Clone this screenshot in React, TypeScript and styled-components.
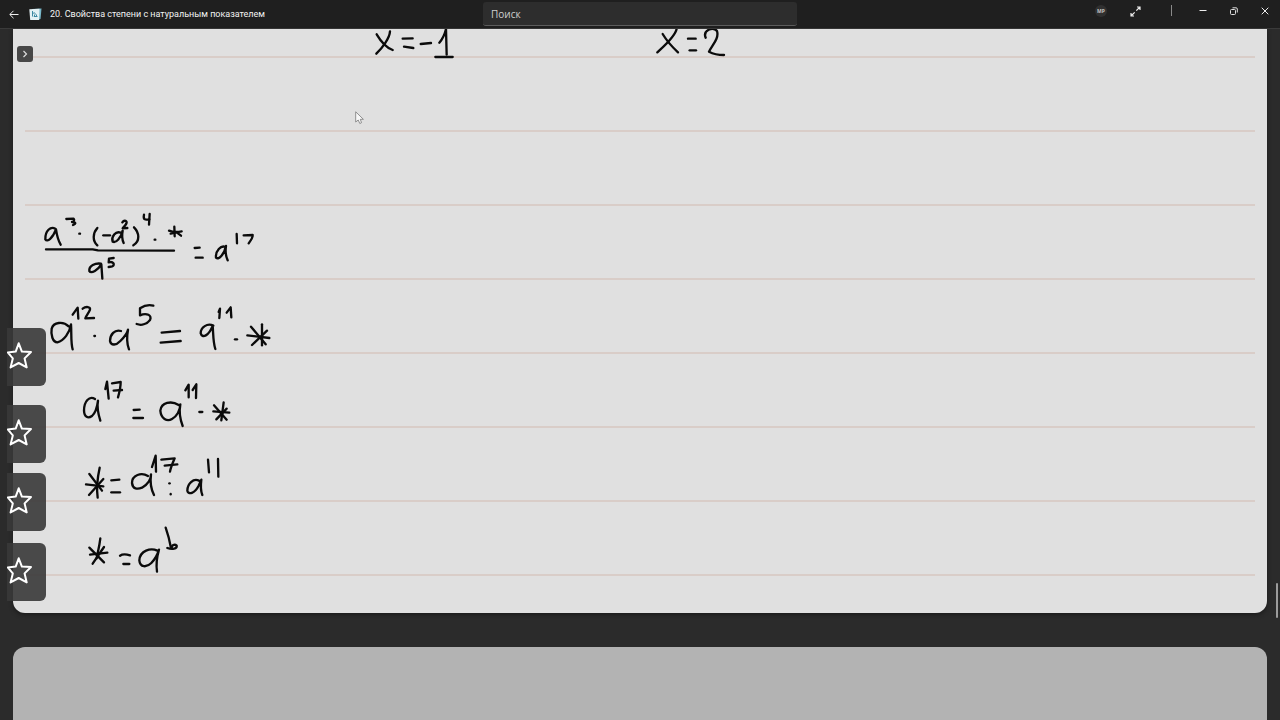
import React from "react";
import styled, { createGlobalStyle } from "styled-components";

const GlobalStyle = createGlobalStyle`
  * { box-sizing: border-box; }
  body {
    margin: 0;
    background: #2b2b2b;
    color: #f2f2f2;
    font-family: "Open Sans", "Noto Sans", sans-serif;
  }
  button { font: inherit; color: inherit; border: 0; padding: 0; background: none; }
`;

const Window = styled.div`
  height: 100vh;
  display: flex;
  flex-direction: column;
  overflow: hidden;
`;

const TitleBar = styled.header`
  flex: none;
  height: 29px;
  display: grid;
  grid-template-columns: 1fr 314px 1fr;
  background: #1f1f1f;
  border-bottom: 1px solid #3a3a3a;
`;

const TitleGroup = styled.div`
  display: flex;
  align-items: center;
  gap: 8px;
  padding-left: 7px;
  min-width: 0;
`;

const IconButton = styled.button<{ $width: number }>`
  width: ${(p) => p.$width}px;
  height: 22px;
  display: flex;
  align-items: center;
  justify-content: center;
`;

const Title = styled.h1`
  margin: 0;
  font-family: Roboto, "Noto Sans", sans-serif;
  font-size: 9px;
  line-height: 16px;
  font-weight: 400;
  white-space: nowrap;
`;

const SearchBox = styled.input`
  align-self: start;
  width: 100%;
  height: 24px;
  margin-top: 2px;
  padding: 0 8px;
  border: 0;
  border-bottom: 1px solid #5c5c5c;
  border-radius: 3px;
  outline: 0;
  background: #2d2d2d;
  color: #f2f2f2;
  font: 10px "Open Sans", "Noto Sans", sans-serif;
  &::placeholder { color: #cfcfcf; opacity: 1; }
`;

const Controls = styled.div`
  display: flex;
  align-items: flex-start;
  justify-content: flex-end;
`;

const AccountControls = styled.div`
  display: flex;
  align-items: center;
  gap: 4px;
  padding-right: 21px;
`;

const Avatar = styled.span`
  width: 12px;
  height: 12px;
  border-radius: 50%;
  background: #303030;
  color: #c4c4c4;
  font-size: 5px;
  line-height: 12px;
  font-weight: 700;
  text-align: center;
`;

const WindowControls = styled.div`
  display: flex;
  gap: 1px;
  padding-left: 16px;
`;

const Divider = styled.span`
  width: 1px;
  height: 11px;
  margin-top: 5px;
  background: #8a8a8a;
`;

const Desk = styled.main`
  position: relative;
  flex: 1;
  min-height: 0;
  display: flex;
  flex-direction: column;
  gap: 34px;
  padding: 0 13px;
`;

const Sheet = styled.section`
  position: relative;
  flex: none;
  padding: 0 12px 37px;
  border-radius: 0 0 12px 12px;
  background: #e0e0e0;
  box-shadow: 0 2px 4px #1c1c1c;
  overflow: hidden;
`;

const Rule = styled.div<{ $first?: boolean }>`
  height: ${(p) => (p.$first ? 29 : 74)}px;
  border-bottom: 2px solid #d9cdc8;
`;

const NextSheet = styled.section`
  flex: 1;
  border-radius: 12px 12px 0 0;
  background: #b3b3b3;
`;

const InkLayer = styled.svg`
  position: absolute;
  left: 0;
  top: 0;
  width: 100%;
  height: 100%;
`;

const ExpandButton = styled.button`
  position: absolute;
  left: 17px;
  top: 17px;
  width: 16px;
  height: 16px;
  display: flex;
  align-items: center;
  justify-content: center;
  border-radius: 3px;
  background: #474747;
`;

const Bookmark = styled.button<{ $top: number }>`
  position: absolute;
  left: 7px;
  top: ${(p) => p.$top}px;
  width: 39px;
  height: 58px;
  display: flex;
  align-items: center;
  padding-bottom: 4px;
  border-radius: 0 6px 6px 0;
  background: rgba(57, 57, 57, 0.9);
`;

const Pointer = styled.svg`
  position: absolute;
  left: 355px;
  top: 82px;
`;

const ScrollThumb = styled.div`
  position: absolute;
  right: 2px;
  top: 554px;
  width: 2px;
  height: 35px;
  border-radius: 1px;
  background: #9c9c9c;
`;

type InkNote = { label: string; x: number; y: number; width: number; strokes: string[] };

/* Pen strokes are stored in tablet units, three to a page pixel. */
const notes: InkNote[] = [
  {
    label: "x = -1, x = 2", x: 327, y: -9, width: 7,
    strokes: [
      "M110 43C120 60 137 82 158 90", "M150 34C149 55 126 85 109 101",
      "M188 56L218 55", "M192 80L220 84", "M242 72L273 69",
      "M298 68C307 58 314 44 318 27L320 104", "M286 111L338 111",
      "M968 42C980 62 1000 84 1014 97", "M1010 26C1006 50 970 80 952 97",
      "M1044 56L1067 56", "M1049 91L1068 91",
      "M1097 53C1088 32 1118 18 1131 33C1138 55 1117 75 1107 95C1120 102 1135 105 1152 105",
    ],
  },
  {
    label: "a³ · (-a²)⁴ · * / a⁵ = a¹⁷", x: 17, y: 171, width: 7,
    strokes: [
      "M76 86C62 78 45 92 46 118C52 128 68 114 78 88C80 102 84 120 92 134",
      "M109 57L131 56C135 61 130 66 126 66C134 66 142 69 129 75", "M148 101L150 101",
      "M202 84C188 100 187 122 202 136", "M220 106L240 106",
      "M272 98C257 92 243 110 248 125C258 130 273 113 278 92C275 107 276 118 281 129",
      "M277 67C283 58 293 63 289 71C285 78 280 82 278 85L292 84",
      "M312 82C328 98 331 124 310 136",
      "M342 44C339 58 344 61 358 58", "M359 42L357 74", "M374 119L376 119",
      "M417 92C430 97 441 97 455 94", "M433 80L434 109", "M422 101L440 97L453 107",
      "M48 148L188 148L204 151L432 152",
      "M213 191C196 188 176 198 178 213C184 222 204 210 214 193L217 236",
      "M251 174L237 176L236 187C250 183 256 194 247 199L236 201",
      "M494 144L509 143", "M497 173L518 173",
      "M586 141C573 135 556 153 558 173C567 181 583 162 588 138C585 156 588 170 593 181",
      "M620 102L621 130", "M641 106L668 105C669 112 662 122 656 130",
    ],
  },
  {
    label: "a¹² · a⁵ = a¹¹ · *", x: -13, y: 261, width: 7,
    strokes: [
      "M206 109C190 93 160 96 155 116C152 134 158 157 172 157C192 152 209 128 213 103C215 130 212 160 218 178",
      "M218 74L233 53L235 86", "M248 56C258 48 272 50 270 59C266 70 258 78 256 85L282 84",
      "M283 138L285 138",
      "M363 123C344 117 330 134 330 153C333 168 349 166 361 153C372 142 382 128 384 119C380 140 380 160 387 178",
      "M460 47C446 43 432 47 420 55L420 76C440 67 457 76 450 90C440 103 424 107 410 102",
      "M485 128L540 123", "M482 158L542 153",
      "M640 107C622 98 602 112 602 130C606 146 627 138 638 107C640 130 639 156 646 177",
      "M656 66L660 56L658 84", "M680 68L692 52L694 82", "M705 148L711 148",
      "M742 136L808 144", "M753 110L797 163", "M786 103L786 166", "M801 122L756 165",
    ],
  },
  {
    label: "a¹⁷ = a¹¹ · *", x: -13, y: 341, width: 7,
    strokes: [
      "M285 87C268 76 252 94 252 122C253 142 264 146 276 138C287 128 292 108 294 92C290 112 296 136 301 152",
      "M316 57L321 35L326 86", "M336 40L362 36C362 50 358 68 354 82", "M341 62L366 60",
      "M401 120L419 119", "M400 144L429 144",
      "M536 105C514 91 484 97 481 122C483 146 501 156 516 147C530 140 541 121 541 103C536 130 541 150 548 168",
      "M556 61L566 44L566 82", "M578 60L589 43L588 84", "M598 126L607 126",
      "M640 124L688 128", "M642 106L680 149", "M671 97L664 151", "M680 116L649 148",
    ],
  },
  {
    label: "* = a¹⁷ : a¹¹", x: -13, y: 416, width: 7,
    strokes: [
      "M299 68C292 100 289 130 293 158", "M258 118L310 124", "M268 87L306 137", "M310 102L267 150",
      "M334 106L358 104", "M334 142L360 142",
      "M444 93C424 81 396 90 396 114C398 132 412 134 426 128C444 118 453 104 453 88C450 110 454 134 462 150",
      "M456 66L467 32L468 80", "M484 44L524 40C518 54 512 68 510 80", "M494 62L532 58",
      "M508 115L509 115", "M512 147L512 148",
      "M597 107C580 99 562 116 562 137C565 151 584 145 596 122L604 104C602 120 602 138 607 150",
      "M624 44L627 82", "M654 42L655 95",
    ],
  },
  {
    label: "* = a⁶", x: -13, y: 486, width: 7,
    strokes: [
      "M301 70C298 96 293 112 290 130", "M268 98L312 142", "M270 119L322 113", "M312 96L278 146",
      "M360 122C369 116 380 118 390 121", "M370 147L388 147",
      "M472 107C452 98 420 106 418 136C420 158 440 158 454 144C466 132 474 114 477 104C470 128 468 150 471 170",
      "M497 38C504 58 510 82 513 99", "M502 99C516 104 532 102 530 92C524 86 514 90 515 101",
    ],
  },
];

const bookmarks = [299, 376, 444, 514];
const ruledRows = [1, 2, 3, 4, 5, 6, 7];

function StarIcon() {
  return (
    <svg width="25" height="27" viewBox="0 0 25 27" fill="none" stroke="#fff" strokeWidth="2" strokeLinejoin="round" aria-hidden="true">
      <path d="M11.7 1.3L14.9 9.6L24 10L17.6 16.4L19.7 25.4L11.7 21L3.6 25.4L5.8 16.4L.8 10.4L8.7 9.6Z" />
    </svg>
  );
}

function NotebookIcon() {
  return (
    <svg width="13" height="13" viewBox="0 0 13 13" aria-hidden="true">
      <path d="M3 1L12.5 .5L11.5 11L9 12Z" fill="#79b8ca" />
      <path d="M.3 1.3L10.5 .8L10 12H1.2Z" fill="#e4f1f5" />
      <path d="M3.5 3V8.5M3.5 6C5 4 6.5 4.5 6 6.5L5 8.5H8.5M7.5 6.5V8.5" fill="none" stroke="#3c89a3" strokeWidth="1" />
    </svg>
  );
}

export default function App() {
  return (
    <>
      <GlobalStyle />
      <Window>
        <TitleBar>
          <TitleGroup>
            <IconButton $width={14} aria-label="Назад">
              <svg width="10" height="10" viewBox="0 0 10 10" fill="none" stroke="#eee" strokeWidth="1" aria-hidden="true">
                <path d="M9.5 5.5H1M4.5 1.8L.8 5.5L4.5 9.2" />
              </svg>
            </IconButton>
            <NotebookIcon />
            <Title>20. Свойства степени с натуральным показателем</Title>
          </TitleGroup>
          <SearchBox type="text" placeholder="Поиск" aria-label="Поиск" />
          <Controls>
            <AccountControls>
              <IconButton $width={30} aria-label="Учётная запись"><Avatar>MP</Avatar></IconButton>
              <IconButton $width={30} aria-label="Во весь экран">
                <svg width="11" height="11" viewBox="0 0 11 11" fill="none" stroke="#eee" strokeWidth="1.2" aria-hidden="true">
                  <path d="M7 1H10V4M10 1L6.3 4.7M4 10H1V7M1 10L4.7 6.3" />
                </svg>
              </IconButton>
            </AccountControls>
            <Divider />
            <WindowControls>
              <IconButton $width={30} aria-label="Свернуть">
                <svg width="8" height="8" viewBox="0 0 8 8" stroke="#eee" aria-hidden="true"><path d="M.5 3.5H7.5" /></svg>
              </IconButton>
              <IconButton $width={30} aria-label="Восстановить">
                <svg width="8" height="8" viewBox="0 0 8 8" fill="none" stroke="#ddd" aria-hidden="true">
                  <rect x=".5" y="2.5" width="5" height="5" rx="1" />
                  <path d="M2.5 .8H6Q7.3 .8 7.3 2V5.5" />
                </svg>
              </IconButton>
              <IconButton $width={30} aria-label="Закрыть">
                <svg width="8" height="8" viewBox="0 0 8 8" stroke="#eee" aria-hidden="true"><path d="M.7 .7L7.3 7.3M7.3 .7L.7 7.3" /></svg>
              </IconButton>
            </WindowControls>
          </Controls>
        </TitleBar>
        <Desk>
          <Sheet>
            <Rule $first />
            {ruledRows.map((n) => <Rule key={n} />)}
            <InkLayer fill="none" stroke="#0b0b0b" strokeLinecap="round" strokeLinejoin="round">
              {notes.map((note) => (
                <g key={note.label} role="img" aria-label={note.label} strokeWidth={note.width}
                  transform={`translate(${note.x} ${note.y}) scale(${1 / 3})`}>
                  {note.strokes.map((d) => <path key={d} d={d} />)}
                </g>
              ))}
            </InkLayer>
          </Sheet>
          <NextSheet />
          <ExpandButton aria-label="Показать панель">
            <svg width="6" height="8" viewBox="0 0 6 8" fill="none" stroke="#ddd" strokeWidth="1.2" aria-hidden="true"><path d="M1.5 1L4.5 4L1.5 7" /></svg>
          </ExpandButton>
          {bookmarks.map((top) => (
            <Bookmark key={top} $top={top} aria-label="Закладка"><StarIcon /></Bookmark>
          ))}
          <Pointer width="10" height="14" viewBox="0 0 10 14" aria-hidden="true">
            <path d="M.7 .8V11L3.2 9L4.8 12.5L6.5 11.7L5.3 8.3H8.4Z" fill="#f8f8f8" stroke="#777" strokeWidth=".8" strokeLinejoin="round" />
          </Pointer>
          <ScrollThumb />
        </Desk>
      </Window>
    </>
  );
}
